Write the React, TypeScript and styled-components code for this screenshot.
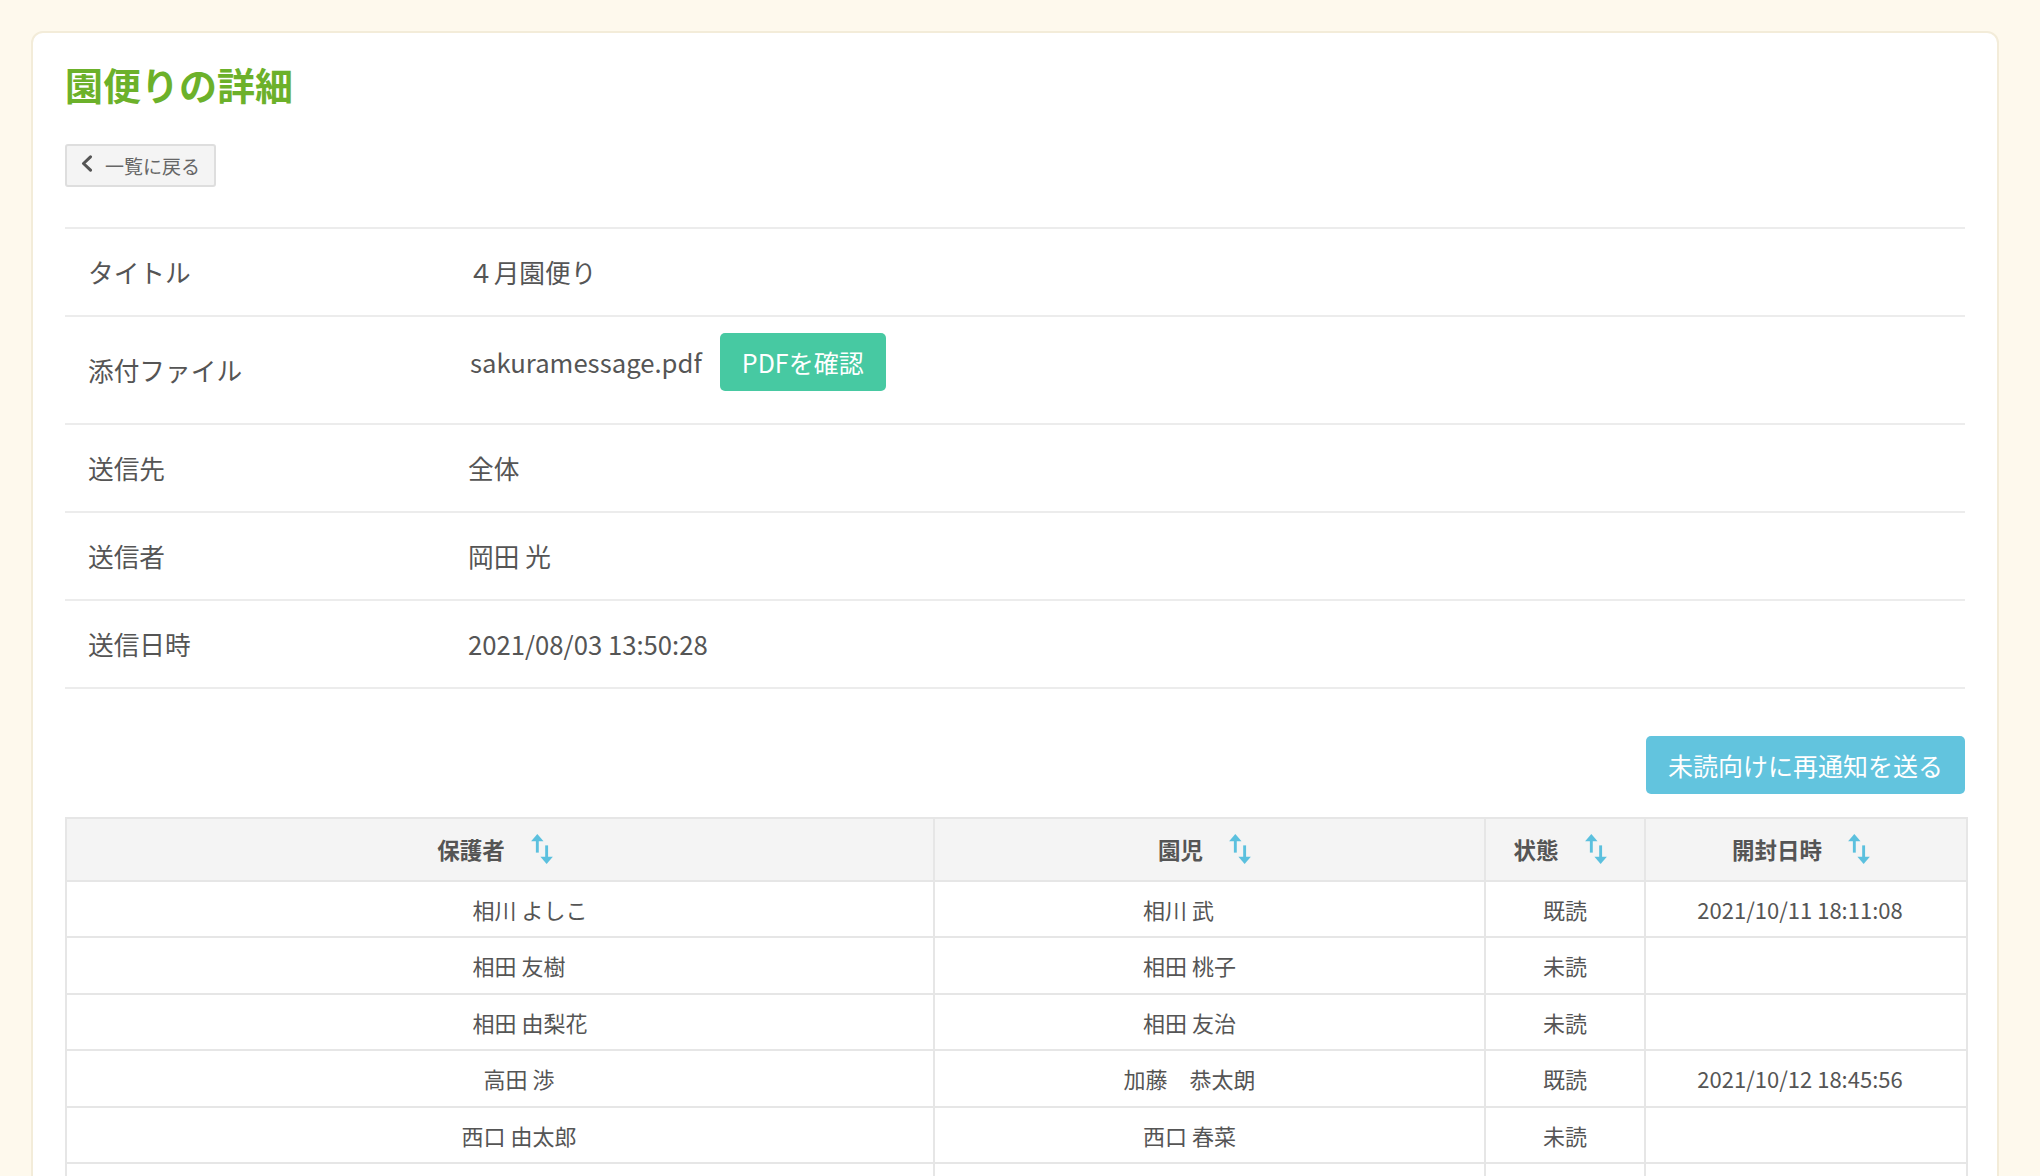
import React from "react";
import styled, { createGlobalStyle } from "styled-components";

const GREEN = "#6cb12a";
const TEXT = "#555555";
const LINE = "#ececec";
const TABLE_LINE = "#e6e6e6";
const SORT_BLUE = "#5bc0de";

const GlobalStyle = createGlobalStyle`
  html, body {
    margin: 0;
    height: 100%;
    overflow: hidden;
    background: #fef9ed;
  }
  body {
    font-family: "Noto Sans CJK JP", "Noto Sans", sans-serif;
    color: ${TEXT};
  }
`;

const Page = styled.div`
  box-sizing: border-box;
  height: 1176px;
  padding: 31px 41px 0 31px;
  overflow: hidden;
`;

const Card = styled.section`
  background: #fff;
  border: 2px solid #f3ecd9;
  border-radius: 12px;
  padding: 28px 32px 40px;
`;

const Title = styled.h1`
  margin: 0;
  font-size: 38px;
  line-height: 1.2;
  font-weight: 700;
  color: ${GREEN};
`;

const BackButton = styled.button`
  display: flex;
  align-items: center;
  gap: 12px;
  box-sizing: border-box;
  height: 43px;
  margin-top: 37px;
  padding: 0 14px 0 14px;
  background: #f4f4f4;
  border: 2px solid #dedede;
  border-radius: 3px;
  font-family: inherit;
  font-size: 19px;
  color: #666;
  svg {
    margin-top: -4px;
  }
`;

const InfoList = styled.div`
  margin-top: 40px;
`;

const InfoRow = styled.div<{ $compact?: boolean }>`
  display: grid;
  grid-template-columns: 403px 1fr;
  align-items: center;
  border-top: 2px solid ${LINE};
  padding: ${(p) => (p.$compact ? "16px 0" : "24px 0")};
  &:last-child {
    border-bottom: 2px solid ${LINE};
  }
`;

const Label = styled.div`
  padding-left: 23px;
  font-size: 25.7px;
  line-height: 38px;
`;

const Value = styled.div<{ $withButton?: boolean }>`
  display: flex;
  align-items: center;
  gap: 18px;
  font-size: 25.7px;
  line-height: 38px;
  margin-bottom: ${(p) => (p.$withButton ? "16px" : "0")};
`;

const FileName = styled.span`
  margin-left: 2px;
`;

const PdfButton = styled.button`
  height: 58px;
  padding: 0 22px;
  border: none;
  border-radius: 5px;
  background: #47c9a2;
  color: #fff;
  font-family: inherit;
  font-size: 25px;
`;

const ActionBar = styled.div`
  display: flex;
  justify-content: flex-end;
  margin-top: 47px;
`;

const ResendButton = styled.button`
  height: 58px;
  padding: 0 22px;
  border: none;
  border-radius: 5px;
  background: #62c4de;
  color: #fff;
  font-family: inherit;
  font-size: 25px;
`;

const Table = styled.table`
  width: 100%;
  margin-top: 23px;
  border-collapse: collapse;
  table-layout: fixed;
  border: 2px solid ${TABLE_LINE};
`;

const Col = styled.col<{ $width: number }>`
  width: ${(p) => p.$width}px;
`;

const Th = styled.th`
  height: 61px;
  padding: 0 9px 0 0;
  background: #f4f4f4;
  border: 2px solid ${TABLE_LINE};
  font-size: 22.5px;
  font-weight: 700;
  color: ${TEXT};
`;

const ThInner = styled.span`
  display: inline-flex;
  align-items: center;
  gap: 26px;
`;

const Td = styled.td<{ $left?: number; $right?: number }>`
  height: 54.5px;
  padding: 0 ${(p) => p.$right ?? 0}px 0 ${(p) => p.$left ?? 0}px;
  border: 2px solid ${TABLE_LINE};
  text-align: center;
  font-size: 22px;
  color: ${TEXT};
`;

const Chevron = () => (
  <svg width="12" height="17" viewBox="0 0 12 17">
    <polyline
      points="9.5,1.8 2.5,8.5 9.5,15.2"
      fill="none"
      stroke="#555"
      strokeWidth="3"
      strokeLinecap="round"
      strokeLinejoin="round"
    />
  </svg>
);

const SortIcon = () => (
  <svg width="23" height="30" viewBox="0 0 22 29">
    <rect x="4.6" y="6" width="2.8" height="12" fill={SORT_BLUE} />
    <polygon points="0,7 6,0 12,7" fill={SORT_BLUE} />
    <rect x="13.6" y="11" width="2.8" height="12" fill={SORT_BLUE} />
    <polygon points="9,22 15,29 21,22" fill={SORT_BLUE} />
  </svg>
);

const columns = [
  { key: "guardian", label: "保護者", width: 868 },
  { key: "child", label: "園児", width: 551 },
  { key: "status", label: "状態", width: 160 },
  { key: "openedAt", label: "開封日時", width: 322 },
];

const rows = [
  { guardian: "　相川 よしこ", child: "相川 武", childPad: 22, status: "既読", openedAt: "2021/10/11 18:11:08" },
  { guardian: "相田 友樹", child: "相田 桃子", childPad: 0, status: "未読", openedAt: "" },
  { guardian: "　相田 由梨花", child: "相田 友治", childPad: 0, status: "未読", openedAt: "" },
  { guardian: "高田 渉", child: "加藤　恭太朗", childPad: 0, status: "既読", openedAt: "2021/10/12 18:45:56" },
  { guardian: "西口 由太郎", child: "西口 春菜", childPad: 0, status: "未読", openedAt: "" },
  { guardian: "", child: "", childPad: 0, status: "", openedAt: "" },
];

const App = () => {
  return (
    <>
      <GlobalStyle />
      <Page>
        <Card>
          <Title>園便りの詳細</Title>
          <BackButton>
            <Chevron />
            一覧に戻る
          </BackButton>

          <InfoList>
            <InfoRow>
              <Label>タイトル</Label>
              <Value>４月園便り</Value>
            </InfoRow>
            <InfoRow $compact>
              <Label>添付ファイル</Label>
              <Value $withButton>
                <FileName>sakuramessage.pdf</FileName>
                <PdfButton>PDFを確認</PdfButton>
              </Value>
            </InfoRow>
            <InfoRow>
              <Label>送信先</Label>
              <Value>全体</Value>
            </InfoRow>
            <InfoRow>
              <Label>送信者</Label>
              <Value>岡田 光</Value>
            </InfoRow>
            <InfoRow>
              <Label>送信日時</Label>
              <Value>2021/08/03 13:50:28</Value>
            </InfoRow>
          </InfoList>

          <ActionBar>
            <ResendButton>未読向けに再通知を送る</ResendButton>
          </ActionBar>

          <Table>
            <colgroup>
              {columns.map((c) => (
                <Col key={c.key} $width={c.width} />
              ))}
            </colgroup>
            <thead>
              <tr>
                {columns.map((c) => (
                  <Th key={c.key}>
                    <ThInner>
                      {c.label}
                      <SortIcon />
                    </ThInner>
                  </Th>
                ))}
              </tr>
            </thead>
            <tbody>
              {rows.map((r, i) => (
                <tr key={i}>
                  <Td $left={38}>{r.guardian}</Td>
                  <Td $right={40 + r.childPad}>{r.child}</Td>
                  <Td>{r.status}</Td>
                  <Td $right={12}>{r.openedAt}</Td>
                </tr>
              ))}
            </tbody>
          </Table>
        </Card>
      </Page>
    </>
  );
};

export default App;
